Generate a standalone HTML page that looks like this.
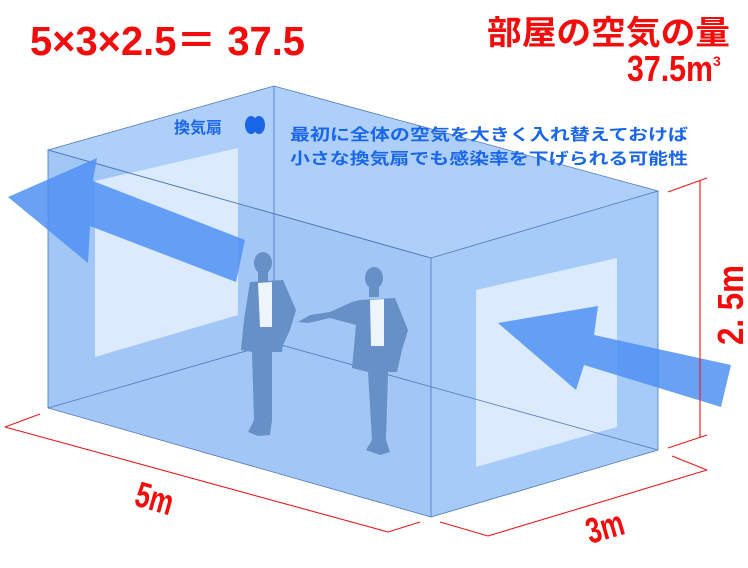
<!DOCTYPE html>
<html><head><meta charset="utf-8"><style>
html,body{margin:0;padding:0;background:#fff;}
svg{display:block;}
</style></head><body>
<svg width="748" height="568" viewBox="0 0 748 568" xmlns="http://www.w3.org/2000/svg" font-family="'Liberation Sans','Noto Sans CJK JP',sans-serif">
<polygon points="48,150 274,86 658,191 431,258" fill="#aecff9"/>
<polygon points="48,150 431,258 431,517 48,408" fill="#a2c6f6"/>
<polygon points="431,258 658,191 658,450 431,517" fill="#a6cbf8"/>
<polygon points="95,181 238,148 238,315 95,357" fill="#dbeafc"/>
<polygon points="476,290 617,258 617,427 476,467" fill="#dbeafc"/>
<g stroke="#4d79b8" stroke-width="0.8" fill="none">
<line x1="274" y1="86" x2="274" y2="343"/>
<line x1="48" y1="408" x2="274" y2="343"/>
<line x1="274" y1="343" x2="658" y2="450"/>
<polygon points="48,150 274,86 658,191 431,258"/>
<polygon points="48,150 431,258 431,517 48,408"/>
<line x1="658" y1="191" x2="658" y2="450"/>
<line x1="431" y1="517" x2="658" y2="450"/>
</g>
<polygon points="8,197 97,158 93,181 245,240 236,282 90,226 88,263" fill="#4f90f3" opacity="0.85"/>
<polygon points="498,323 598,306 594,335 731,365 721,407 584,365 576,390" fill="#4f90f3" opacity="0.85"/>
<g fill="#6690c6">
<ellipse cx="263" cy="263" rx="9" ry="11"/>
<rect x="258" y="270" width="10" height="12"/>
<path d="M250,282 L283,280 L296,310 L290,330 L283,345 L282,352 L272,352 L272,420 L270,435 L258,436 L248,432 L254,420 L252,352 L241,350 L244,320 Z"/>
<ellipse cx="374" cy="278" rx="9" ry="11"/>
<rect x="369" y="285" width="10" height="12"/>
<path d="M360,300 L395,298 L408,330 L402,350 L397,372 L388,372 L386,440 L390,452 L380,455 L366,450 L372,440 L368,372 L352,368 L356,325 L330,318 L308,323 L298,322 L310,315 L330,312 L352,302 Z"/>
</g>
<g fill="#eef4fc">
<path d="M258,283 L272,282 L272,327 L260,327 Z"/>
<path d="M370,300 L384,299 L384,346 L371,346 Z"/>
</g>
<ellipse cx="251" cy="125" rx="6" ry="9" fill="#1a64e6"/>
<ellipse cx="259" cy="125" rx="6" ry="9" fill="#1a64e6"/>
<g fill="#1a66e8" font-weight="bold" font-size="16">
<text x="174" y="133" font-size="16">換気扇</text>
<text x="290" y="140" textLength="398" lengthAdjust="spacingAndGlyphs">最初に全体の空気を大きく入れ替えておけば</text>
<text x="290" y="164" textLength="398" lengthAdjust="spacingAndGlyphs">小さな換気扇でも感染率を下げられる可能性</text>
</g>
<g fill="#f20d0d" font-weight="bold">
<text x="30" y="55" font-size="41" textLength="275" lengthAdjust="spacingAndGlyphs">5×3×2.5＝ 37.5</text>
<text x="487" y="44" font-size="33" textLength="243" lengthAdjust="spacingAndGlyphs">部屋の空気の量</text>
<text x="627" y="81" font-size="36" textLength="86" lengthAdjust="spacingAndGlyphs">37.5m</text>
<text x="713" y="66" font-size="14">3</text>
</g>
<g stroke="#e8191c" stroke-width="1.1" fill="none">
<line x1="5" y1="427" x2="388" y2="532"/>
<line x1="5" y1="427" x2="40" y2="414"/>
<line x1="388" y1="532" x2="420" y2="522"/>
<line x1="488" y1="536" x2="707" y2="470"/>
<line x1="440" y1="522" x2="488" y2="536"/>
<line x1="672" y1="456" x2="707" y2="470"/>
<line x1="700" y1="180" x2="700" y2="437"/>
<line x1="668" y1="192" x2="707" y2="178"/>
<line x1="668" y1="448" x2="707" y2="435"/>
</g>
<g fill="#f20d0d" font-weight="bold" font-size="36">
<text transform="translate(133,505) rotate(16)" textLength="38" lengthAdjust="spacingAndGlyphs">5m</text>
<text transform="translate(590,544) rotate(-16)" textLength="38" lengthAdjust="spacingAndGlyphs">3m</text>
<text transform="translate(743,345) rotate(-90)" textLength="80" lengthAdjust="spacingAndGlyphs">2. 5m</text>
</g>
</svg>
</body></html>
